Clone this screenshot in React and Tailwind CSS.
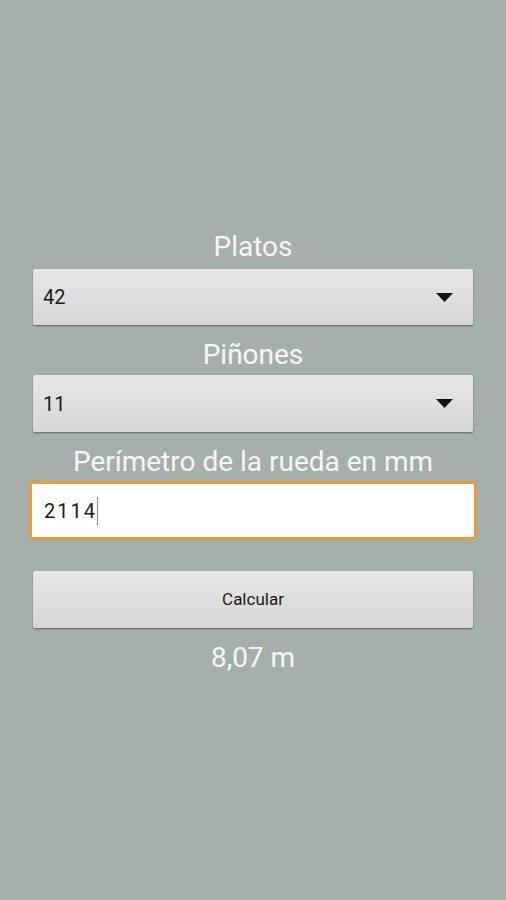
export default function App() {
  return (
    <div className="min-h-[900px] w-full bg-[#a7afad] font-['Roboto',sans-serif]">
      <div className="flex flex-col pt-[231px] px-[33px]">
        {/* Platos */}
        <div className="h-[32px] flex items-center justify-center text-[28px] text-[#f6f6f6]">Platos</div>
        <div className="mt-[6px] h-[56px] flex items-center justify-between pl-[10px] pr-[20px] bg-gradient-to-b from-[#e6e7e6] to-[#d6d7d6] rounded-[2px] shadow-[0_1px_2px_rgba(0,0,0,0.45)] text-[20px] text-[#1a1a1a]">
          <span>42</span>
          <svg width="17" height="9" viewBox="0 0 17 9"><path d="M0 0h17L8.5 9z" fill="#111" /></svg>
        </div>

        {/* Piñones */}
        <div className="mt-[14px] h-[32px] flex items-center justify-center text-[28px] text-[#f6f6f6]">Piñones</div>
        <div className="mt-[4px] h-[57px] flex items-center justify-between pl-[10px] pr-[20px] bg-gradient-to-b from-[#e6e7e6] to-[#d6d7d6] rounded-[2px] shadow-[0_1px_2px_rgba(0,0,0,0.45)] text-[20px] text-[#1a1a1a]">
          <span>11</span>
          <svg width="17" height="9" viewBox="0 0 17 9"><path d="M0 0h17L8.5 9z" fill="#111" /></svg>
        </div>

        {/* Perímetro */}
        <div className="mt-[14px] h-[32px] flex items-center justify-center text-[28px] text-[#f6f6f6]">Perímetro de la rueda en mm</div>
        <div className="-mx-[3px] mt-[4px] h-[57px] flex items-center pl-[12px] bg-white border-2 border-[#f39a2a] rounded-[3px] shadow-[0_0_3px_rgba(240,140,30,0.8)] text-[20px] tracking-[2px] text-[#1a1a1a]">
          <span>2114</span>
          <span className="w-px h-[28px] bg-[#888]" />
        </div>

        {/* Calcular */}
        <button className="mt-[32px] h-[57px] flex items-center justify-center bg-gradient-to-b from-[#e6e7e6] to-[#d6d7d6] rounded-[2px] shadow-[0_1px_2px_rgba(0,0,0,0.45)] text-[17px] text-[#1a1a1a]">
          Calcular
        </button>

        <div className="mt-[14px] h-[32px] flex items-center justify-center text-[28px] text-[#f6f6f6]">8,07 m</div>
      </div>
    </div>
  );
}
